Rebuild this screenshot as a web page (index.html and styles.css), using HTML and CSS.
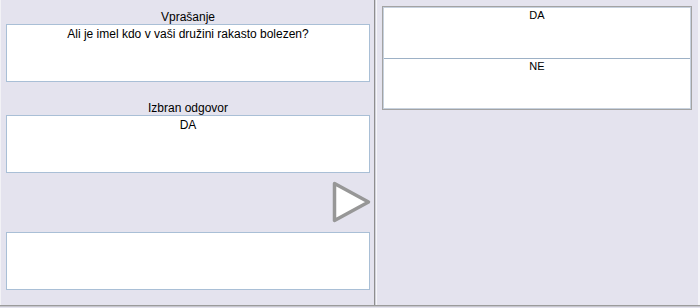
FILE: index.html
```html
<!DOCTYPE html>
<html lang="sl">
<head>
  <meta charset="UTF-8">
  <title>Vprašanje</title>
  <link rel="stylesheet" href="styles.css">
</head>
<body>
    <div class="screen">
        <div class="left-panel">
            <div class="label">Vprašanje</div>
            <div class="text-box">Ali je imel kdo v vaši družini rakasto bolezen?</div>

            <div class="label label-answer">Izbran odgovor</div>
            <div class="text-box">DA</div>

            <div class="next-row">
                <svg class="next-btn" width="40" height="42" viewBox="0 0 40 42">
                    <polygon points="2.5,2.5 36.5,21 2.5,39.5" fill="#fff" stroke="#979797" stroke-width="3.5" stroke-linejoin="round" />
                </svg>
            </div>

            <div class="text-box"></div>
        </div>

        <div class="divider"></div>

        <div class="right-panel">
            <div class="answer-list">
                <div class="answer">DA</div>
                <div class="answer">NE</div>
            </div>
        </div>
    </div>
</body>
</html>
```

FILE: styles.css
```css
* {
    box-sizing: border-box;
}
body {
    margin: 0;
    height: 308px;
    background-color: #e4e3ee;
    font-family: Tahoma, "Liberation Sans", sans-serif;
    font-size: 12px;
    color: #000;
    overflow: hidden;
}
.screen {
    display: flex;
    height: 306px;
    border-bottom: 1px solid #9b9b9b;
    box-shadow: 0 1px 0 #c6c6cc;
}
.left-panel {
    width: 374px;
    padding: 10px 4px 0 5px;
    display: flex;
    flex-direction: column;
    border-left: 1px solid #f2f2f6;
}
.label {
    height: 14px;
    line-height: 14px;
    text-align: center;
}
.label-answer {
    margin-top: 19px;
}
.text-box {
    height: 58px;
    background: #fff;
    border: 1px solid #a9bfd6;
    padding-top: 2px;
    line-height: 14px;
    text-align: center;
}
.next-row {
    display: flex;
    justify-content: flex-end;
    padding: 8px 0 9px;
}
.next-btn {
    display: block;
    margin-right: -2px;
}
.divider {
    width: 3px;
    background: #d2d2da;
    border-left: 1px solid #8e8e8e;
    border-right: 1px solid #f6f6f9;
}
.right-panel {
    flex: 1;
    padding: 6px 6px 0 5px;
    border-right: 2px solid #f4f4f8;
}
.answer-list {
    border: 1px solid #a3a3a3;
    padding: 1px;
    background: #c7d1de;
}
.answer {
    height: 50px;
    background: #fff;
    text-align: center;
    font-family: "Liberation Sans", Arial, sans-serif;
    font-size: 11px;
    padding-top: 1px;
}
.answer + .answer {
    border-top: 1px solid #9db1c6;
    height: 50px;
}
```
